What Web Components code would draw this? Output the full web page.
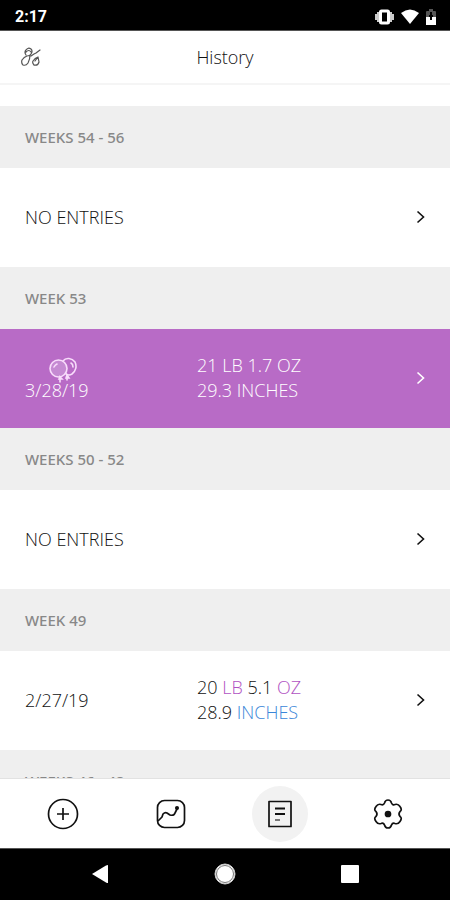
<!DOCTYPE html>
<html lang="en">
<head>
<meta charset="utf-8">
<meta name="viewport" content="width=device-width, initial-scale=1">
<title>History</title>
<style>
  html, body { margin: 0; height: 100%; }
  body { font-family: "Open Sans", "Noto Sans", sans-serif; color: #111; background: #fff; }
</style>
</head>
<body>
<app-shell>
  <status-bar slot="top">2:17</status-bar>
  <title-bar slot="top">History</title-bar>
  <week-section label="WEEKS 54 - 56"><entry-row><span>NO ENTRIES</span></entry-row></week-section>
  <week-section label="WEEK 53">
    <entry-row highlight>
      <birthday-date>3/28/19</birthday-date>
      <measure-lines slot="measures">
        <span>21 LB 1.7 OZ</span>
        <span slot="length">29.3 INCHES</span>
      </measure-lines>
    </entry-row>
  </week-section>
  <week-section label="WEEKS 50 - 52"><entry-row><span>NO ENTRIES</span></entry-row></week-section>
  <week-section label="WEEK 49">
    <entry-row>
      <span>2/27/19</span>
      <measure-lines slot="measures">
        <span>20 <unit-label kind="weight">LB</unit-label> 5.1 <unit-label kind="weight">OZ</unit-label></span>
        <span slot="length">28.9 <unit-label kind="length">INCHES</unit-label></span>
      </measure-lines>
    </entry-row>
  </week-section>
  <week-section label="WEEKS 46 - 48"></week-section>
  <tab-bar slot="bottom"></tab-bar>
  <system-bar slot="bottom"></system-bar>
</app-shell>

<script>
function define(name, html) {
  const template = document.createElement('template');
  template.innerHTML = html;
  customElements.define(name, class extends HTMLElement {
    constructor() {
      super();
      this.attachShadow({ mode: 'open' }).append(template.content.cloneNode(true));
    }
    connectedCallback() {
      const label = this.shadowRoot.querySelector('[data-label]');
      if (label) label.textContent = this.getAttribute('label');
    }
  });
}

define('app-shell', `
  <style>
    :host { display: flex; flex-direction: column; height: 100vh; overflow: hidden; }
    main { flex: 1; min-height: 0; overflow: hidden; padding-top: 21px; box-sizing: border-box; }
  </style>
  <slot name="top"></slot>
  <main><slot></slot></main>
  <slot name="bottom"></slot>`);

define('status-bar', `
  <style>
    :host { display: flex; align-items: center; justify-content: space-between; flex: none;
      padding: 6px 14px 3px 15px; background: #000; color: #fff; border-bottom: 1px solid #555;
      font: 700 16px/21px Roboto, sans-serif; }
    .icons { display: flex; align-items: center; gap: 7px; }
    svg { display: block; }
  </style>
  <slot></slot>
  <div class="icons">
    <svg width="19" height="16" viewBox="0 0 19 16" aria-label="Vibrate">
      <path d="M1 5v6M3 3v10M16 3v10M18 5v6" stroke="#ccc" stroke-width="2"/>
      <rect x="5.500" y="2" width="8" height="12" rx="1" fill="#000" stroke="#fff" stroke-width="3"/>
    </svg>
    <svg width="18" height="15" viewBox="0 0 18 15" aria-label="Wi-Fi"><path d="M0 4Q9-3 18 4L9 15Z" fill="#fff"/></svg>
    <svg width="10" height="16" viewBox="0 0 10 16" aria-label="Battery">
      <path d="M0 3q0-1 1-1h2V0h4v2h2q1 0 1 1v6H0z" fill="#555"/>
      <path d="M0 8h10v8H0z" fill="#fff"/><path d="M5 3v8M3 7h4" stroke="#000" stroke-width="2"/>
    </svg>
  </div>`);

define('title-bar', `
  <style>
    :host { display: grid; grid-template-columns: 1fr auto 1fr; align-items: center; flex: none;
      padding: 0 21px; min-height: 52px; border-bottom: 2px solid #f5f5f5; background: #fff; }
    h1 { margin: 0; font-size: 18px; font-weight: 300; line-height: 26px; }
    button { justify-self: start; padding: 0; border: 0; background: none; color: #333; }
    svg { display: block; }
  </style>
  <button aria-label="Profiles">
    <svg width="21" height="20" viewBox="0 0 21 20" fill="none" stroke="#555" stroke-width="1.200" stroke-linecap="round" stroke-linejoin="round">
      <path d="M5 8Q3 5 5 3Q7 0 10 2Q12 4 10 7Q9 9 6 9M5 5Q8 2 10 5M6 9Q3 10 1 13Q0 16 2 18Q5 19 7 16Q9 12 9 8M10 9L13 7L15 6L19 3M13 18Q11 16 12 14Q14 11 17 10L18 15Q17 19 13 18M14 14L17 10"/>
    </svg>
  </button>
  <h1><slot></slot></h1>`);

define('week-section', `
  <style>
    :host { display: block; }
    h2 { margin: 0; padding: 20px 25px; background: #efefef; color: #888;
      font-size: 15px; font-weight: 500; line-height: 22px; font-family: "Noto Sans", "Open Sans", sans-serif; }
  </style>
  <h2 data-label></h2>
  <slot></slot>`);

define('entry-row', `
  <style>
    :host { display: block; font-size: 18px; font-weight: 300; line-height: 25px; }
    a { display: grid; grid-template-columns: 43% 1fr auto; align-items: center; min-height: 99px;
      padding: 0 25px 1px; box-sizing: border-box; color: inherit; text-decoration: none; }
    :host([highlight]) { background: #b86bc6; color: #fff; }
    svg { display: block; grid-column: 3; }
    slot[name] { display: block; }
  </style>
  <a href="#entry">
    <div><slot></slot></div>
    <slot name="measures"></slot>
    <svg width="9" height="14" viewBox="0 0 9 14" fill="none" stroke="currentColor" stroke-width="1.600"><path d="M1.500 1.500L7.500 7L1.500 12.500"/></svg>
  </a>`);

define('birthday-date', `
  <style>
    :host { display: inline-flex; flex-direction: column; vertical-align: top; }
    svg { display: block; align-self: flex-end; margin: 4px 12px -5px 0; }
  </style>
  <svg width="28" height="26" viewBox="0 0 28 26" fill="none" stroke="#f8dcfb" stroke-width="1.600" stroke-linecap="round" aria-label="Birthday">
    <path d="M14 4C17 0 23 1 26 5C28 9 27 14 23 17Q20 19 17 17"/>
    <circle cx="9.500" cy="11.500" r="8.500" fill="#c58ad2"/>
    <path d="M5 10Q6 8 8 7M22 6q2 1 2 4M11 20l-1 2h3l-2-2v5M18 18l-1 3h3l-2-3v5"/>
  </svg>
  <slot></slot>`);

define('measure-lines', `
  <style>:host, div { display: block; white-space: nowrap; }</style>
  <div><slot></slot></div>
  <div><slot name="length"></slot></div>`);

define('unit-label', `
  <style>
    :host { display: inline; }
    :host([kind="weight"]) { color: #b052c2; }
    :host([kind="length"]) { color: #3a86d8; }
  </style><slot></slot>`);

define('tab-bar', `
  <style>
    :host { display: block; flex: none; background: #fff; border-top: 1px solid #e2e2e2; }
    nav { display: flex; justify-content: space-between; padding: 7px 34px 6px 35px; }
    button { display: grid; place-items: center; width: 56px; height: 56px; padding: 0;
      border: 0; border-radius: 50%; background: none; color: #111; }
    [aria-current] { background: #f2f2f2; }
    svg { display: block; fill: none; stroke: currentColor; stroke-width: 1.700; stroke-linejoin: round; }
  </style>
  <nav>
    <button aria-label="Add entry"><svg width="32" height="32" viewBox="0 0 32 32"><circle cx="16" cy="16" r="14.500"/><path d="M16 10v12M10 16h12"/></svg></button>
    <button aria-label="Chart"><svg width="32" height="32" viewBox="0 0 32 32"><rect x="2.500" y="2.500" width="27" height="27" rx="7"/><path d="M3 23L7 19L8 16Q10 14 12 15L15 17Q19 18 20 15L22 11"/><circle cx="22" cy="10" r="1.200" fill="currentColor"/></svg></button>
    <button aria-label="History" aria-current="page"><svg width="32" height="32" viewBox="0 0 32 32"><rect x="5" y="3.500" width="22" height="25"/><path d="M11 10.500h10M11 16h10" stroke-width="2"/><path d="M11 22h5" stroke="#777" stroke-width="2"/></svg></button>
    <button aria-label="Settings"><svg width="32" height="32" viewBox="0 0 32 32"><path d="M12.500 5C13.500 1 18.500 1 19.500 5Q20.500 7.500 23 6.500Q26 5.500 28 8.500Q30.500 12 28 13.500Q26 16 28 18.500Q30.500 20 28 23.500Q26 26.500 23 25.500Q20.500 24.500 19.500 27C18.500 31 13.500 31 12.500 27Q11.500 24.500 9 25.500Q6 26.500 4 23.500Q1.500 20 4 18.500Q6 16 4 13.500Q1.500 12 4 8.500Q6 5.500 9 6.500Q11.500 7.500 12.500 5Z"/><circle cx="16" cy="16" r="2.500" fill="currentColor"/></svg></button>
  </nav>`);

define('system-bar', `
  <style>
    :host { display: block; flex: none; background: #000; border-top: 1px solid #555; }
    div { display: grid; grid-template-columns: repeat(3, 1fr); padding: 14px 37px 15px; }
    button { display: grid; place-items: center; padding: 0; border: 0; background: none; }
    svg { display: block; }
  </style>
  <div>
    <button aria-label="Back"><svg width="22" height="22" viewBox="0 0 22 22"><path d="M19 2v18Q18 20 17 19.500L3 11L17 2.500Q18 2 19 2Z" fill="#fff"/></svg></button>
    <button aria-label="Home"><svg width="22" height="22" viewBox="0 0 22 22"><circle cx="11" cy="11" r="10" fill="#fff" stroke="#ccc"/><circle cx="11" cy="11" r="8.500" fill="none" stroke="#777"/></svg></button>
    <button aria-label="Recent apps"><svg width="22" height="22" viewBox="0 0 22 22"><rect x="2" y="2" width="18" height="18" rx="1" fill="#fff"/></svg></button>
  </div>`);
</script>
</body>
</html>
